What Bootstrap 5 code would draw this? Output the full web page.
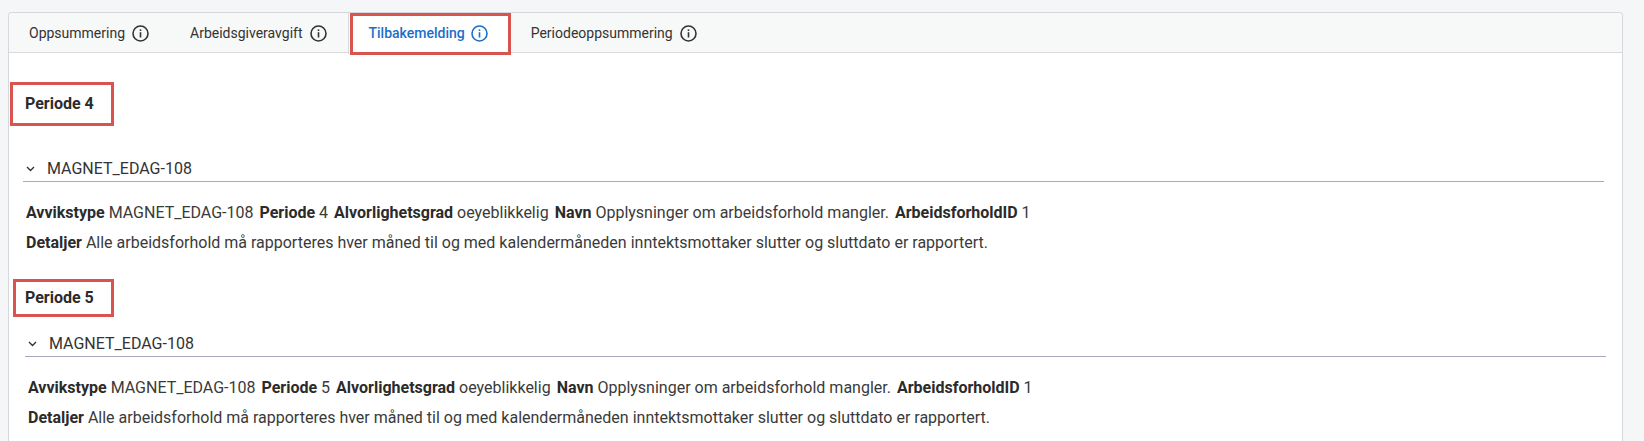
<!DOCTYPE html>
<html lang="no">
<head>
<meta charset="utf-8">
<title>Tilbakemelding</title>
<link href="https://cdn.jsdelivr.net/npm/bootstrap@5.3.0/dist/css/bootstrap.min.css" rel="stylesheet">
<style>
html, body { height: 441px; overflow: hidden; }
body { background: #f5f6f8; font-family: Roboto, "Liberation Sans", sans-serif; font-size: 16px; color: #292929; padding: 12px 21px 0 8px; }
.shell { border: 1px solid #d6d8db; border-bottom: 0; border-radius: 4px 4px 0 0; background: #fff; height: 440px; }
.shell .card-header { background: #f7f8f8; border-bottom: 1px solid #d8dadc; padding: 0; height: 40px; }
.tabrow { flex-wrap: nowrap; }
.tabrow .nav-link { display: flex; align-items: center; gap: 7px; color: #333; font-size: 14px; height: 40px; padding: 0 21px; border: 0; border-radius: 0; }
.tabrow .nav-item:first-child .nav-link { padding: 0 20px; }
.tabrow .nav-link.active { position: relative; gap: 6px; color: #1a6fc9; background: #fff; border-left: 1px solid #d8dadc; height: 41px; padding: 0 22px 0 20px; font-weight: 500; }
.tabrow .nav-link.active::after { content: ""; position: absolute; top: 0; right: -1px; bottom: -1px; left: 1px; border: 3px solid #d9534f; }
.info { width: 17px; height: 17px; flex: none; }
.pane { padding: 29px 18px 0 1px; }
.period { display: inline-block; border: 3px solid #d9534f; font-size: 16px; font-weight: 700; color: #2b2b2b; padding: 9px 17px 9px 12px; line-height: 20px; }
.period-b { margin-left: 3px; margin-top: 21px; padding: 7px 17px 7px 9px; line-height: 18px; }
.sect-a { margin: 28px 0 0 13px; }
.sect-b { margin: 12px -2px 0 15px; }
.acc { display: flex; align-items: center; gap: 12px; padding: 3px 3px 0; line-height: 24px; border-bottom: 1px solid #a9a9bd; font-size: 16px; color: #333; }
.chev { width: 9px; height: 6px; flex: none; }
.facts { padding: 16px 3px 0; }
.fact-row { display: flex; gap: 6px; height: 30px; line-height: 30px; white-space: nowrap; color: #3a3a3a; }
.fact-row b { font-weight: 700; color: #2b2b2b; }
</style>
</head>
<body>
<div class="card shell">
  <div class="card-header">
    <ul class="nav tabrow">
      <li class="nav-item"><a class="nav-link" href="#">Oppsummering <svg class="info" viewBox="0 0 17 17"><circle cx="8.5" cy="8.5" r="7.5" fill="none" stroke="currentColor" stroke-width="1.6"/><rect x="7.7" y="7.2" width="1.6" height="5.3" fill="currentColor"/><rect x="7.7" y="4.4" width="1.6" height="1.6" fill="currentColor"/></svg></a></li>
      <li class="nav-item"><a class="nav-link" href="#">Arbeidsgiveravgift <svg class="info" viewBox="0 0 17 17"><circle cx="8.5" cy="8.5" r="7.5" fill="none" stroke="currentColor" stroke-width="1.6"/><rect x="7.7" y="7.2" width="1.6" height="5.3" fill="currentColor"/><rect x="7.7" y="4.4" width="1.6" height="1.6" fill="currentColor"/></svg></a></li>
      <li class="nav-item"><a class="nav-link active" href="#">Tilbakemelding <svg class="info" viewBox="0 0 17 17"><circle cx="8.5" cy="8.5" r="7.5" fill="none" stroke="currentColor" stroke-width="1.6"/><rect x="7.7" y="7.2" width="1.6" height="5.3" fill="currentColor"/><rect x="7.7" y="4.4" width="1.6" height="1.6" fill="currentColor"/></svg></a></li>
      <li class="nav-item"><a class="nav-link" href="#">Periodeoppsummering <svg class="info" viewBox="0 0 17 17"><circle cx="8.5" cy="8.5" r="7.5" fill="none" stroke="currentColor" stroke-width="1.6"/><rect x="7.7" y="7.2" width="1.6" height="5.3" fill="currentColor"/><rect x="7.7" y="4.4" width="1.6" height="1.6" fill="currentColor"/></svg></a></li>
    </ul>
  </div>
  <div class="pane">
    <div class="period">Periode 4</div>
    <div class="sect-a">
      <div class="acc"><svg class="chev" viewBox="0 0 9 6"><path d="M1 1l3.5 3.5L8 1" fill="none" stroke="currentColor" stroke-width="1.4"/></svg>MAGNET_EDAG-108</div>
      <div class="facts">
        <div class="fact-row"><span><b>Avvikstype</b> MAGNET_EDAG-108</span><span><b>Periode</b> 4</span><span><b>Alvorlighetsgrad</b> oeyeblikkelig</span><span><b>Navn</b> Opplysninger om arbeidsforhold mangler.</span><span><b>ArbeidsforholdID</b> 1</span></div>
        <div class="fact-row"><span><b>Detaljer</b> Alle arbeidsforhold må rapporteres hver måned til og med kalendermåneden inntektsmottaker slutter og sluttdato er rapportert.</span></div>
      </div>
    </div>
    <div class="period period-b">Periode 5</div>
    <div class="sect-b">
      <div class="acc"><svg class="chev" viewBox="0 0 9 6"><path d="M1 1l3.5 3.5L8 1" fill="none" stroke="currentColor" stroke-width="1.4"/></svg>MAGNET_EDAG-108</div>
      <div class="facts">
        <div class="fact-row"><span><b>Avvikstype</b> MAGNET_EDAG-108</span><span><b>Periode</b> 5</span><span><b>Alvorlighetsgrad</b> oeyeblikkelig</span><span><b>Navn</b> Opplysninger om arbeidsforhold mangler.</span><span><b>ArbeidsforholdID</b> 1</span></div>
        <div class="fact-row"><span><b>Detaljer</b> Alle arbeidsforhold må rapporteres hver måned til og med kalendermåneden inntektsmottaker slutter og sluttdato er rapportert.</span></div>
      </div>
    </div>
  </div>
</div>
<script src="https://cdn.jsdelivr.net/npm/bootstrap@5.3.0/dist/js/bootstrap.bundle.min.js"></script>
</body>
</html>
